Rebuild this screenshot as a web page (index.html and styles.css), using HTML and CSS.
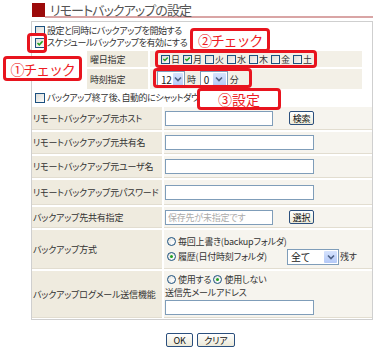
FILE: index.html
```html
<!DOCTYPE html>
<html lang="ja">
<head>
<meta charset="utf-8">
<title>リモートバックアップの設定</title>
<link rel="stylesheet" href="styles.css">
</head>
<body>
<div class="page">
  <div class="hdr">
    <span class="mark"></span>
    <h1 class="title">リモートバックアップの設定</h1>
  </div>
  <div class="panel">
    <div class="opt"><span class="cb"></span><span>設定と同時にバックアップを開始する</span></div>
    <div class="opt"><span class="cb on"><svg viewBox="0 0 8 8"><path d="M1.5 4 L3.3 5.8 L6.6 2.2" fill="none" stroke="#21a121" stroke-width="1.6"/></svg></span><span>スケジュールバックアップを有効にする</span></div>
    <div class="sched">
      <div class="sl r1">曜日指定</div>
      <div class="sv r1 days">
        <span class="day"><span class="cb on"><svg viewBox="0 0 8 8"><path d="M1.5 4 L3.3 5.8 L6.6 2.2" fill="none" stroke="#21a121" stroke-width="1.6"/></svg></span>日</span>
        <span class="day"><span class="cb on"><svg viewBox="0 0 8 8"><path d="M1.5 4 L3.3 5.8 L6.6 2.2" fill="none" stroke="#21a121" stroke-width="1.6"/></svg></span>月</span>
        <span class="day"><span class="cb"></span>火</span>
        <span class="day"><span class="cb"></span>水</span>
        <span class="day"><span class="cb"></span>木</span>
        <span class="day"><span class="cb"></span>金</span>
        <span class="day"><span class="cb"></span>土</span>
      </div>
      <div class="sl r2">時刻指定</div>
      <div class="sv r2 time">
        <span class="sel s-hour"><span class="sel-t">12</span><span class="arr"><svg viewBox="0 0 8 6"><path d="M1 1.5 L4 4.5 L7 1.5" fill="none" stroke="#4d6185" stroke-width="1.6"/></svg></span></span>
        <span class="unit">時</span>
        <span class="sel s-min"><span class="sel-t">0</span><span class="arr"><svg viewBox="0 0 8 6"><path d="M1 1.5 L4 4.5 L7 1.5" fill="none" stroke="#4d6185" stroke-width="1.6"/></svg></span></span>
        <span class="unit">分</span>
      </div>
    </div>
    <div class="opt opt-last"><span class="cb"></span><span>バックアップ終了後、自動的にシャットダウ</span></div>

    <div class="form">
      <div class="lab h1">リモートバックアップ元ホスト</div>
      <div class="val h1"><span class="inp w-s"></span><span class="btn b-search">検索</span></div>

      <div class="lab h2">リモートバックアップ元共有名</div>
      <div class="val h2"><span class="inp w-l"></span></div>

      <div class="lab h3">リモートバックアップ元ユーザ名</div>
      <div class="val h3"><span class="inp w-l"></span></div>

      <div class="lab h4">リモートバックアップ元パスワード</div>
      <div class="val h4"><span class="inp w-l"></span></div>

      <div class="lab h5">バックアップ先共有指定</div>
      <div class="val h5"><span class="inp w-s ph">保存先が未指定です</span><span class="btn b-search">選択</span></div>

      <div class="lab h6">バックアップ方式</div>
      <div class="val h6 stack">
        <div class="line"><span class="rd"></span><span>毎回上書き(backupフォルダ)</span></div>
        <div class="line"><span class="rd on"></span><span class="hist">履歴(日付時刻フォルダ)</span><span class="sel s-keep"><span class="sel-t">全て</span><span class="arr"><svg viewBox="0 0 8 6"><path d="M1 1.5 L4 4.5 L7 1.5" fill="none" stroke="#4d6185" stroke-width="1.6"/></svg></span></span><span>残す</span></div>
      </div>

      <div class="lab h7">バックアップログメール送信機能</div>
      <div class="val h7 stack">
        <div class="line"><span class="rd"></span><span>使用する</span><span class="rd on rd2"></span><span>使用しない</span></div>
        <div class="line">送信先メールアドレス</div>
        <span class="inp w-l"></span>
      </div>
    </div>
  </div>
  <div class="btns"><span class="btn b-ok">OK</span><span class="btn b-clear">クリア</span></div>
</div>

<span class="ring ring-cb"></span>
<span class="note note1">①チェック</span>
<span class="note note2">②チェック</span>
<span class="ring ring-days"></span>
<span class="ring ring-time"></span>
<span class="note note3">③設定</span>
</body>
</html>
```

FILE: styles.css
```css
html, body {
  margin: 0;
  padding: 0;
  background: #fff;
}
body {
  font-family: "Noto Sans CJK JP", "Noto Sans", sans-serif;
  font-feature-settings: "palt";
  font-size: 9px;
  letter-spacing: -0.2px;
  color: #333;
  width: 380px;
  height: 351px;
  position: relative;
  overflow: hidden;
}
.page {
  margin-left: 31px;
  width: 342px;
}
.hdr {
  display: flex;
  align-items: flex-start;
  padding-top: 3px;
  height: 18px;
}
.mark {
  display: block;
  width: 13px;
  height: 14px;
  margin-left: 1px;
  background: #9c0a0a;
}
.title {
  flex: 1;
  margin: 0;
  height: 13px;
  padding-left: 5px;
  border-bottom: 2px solid #d9a5a5;
  font-size: 13px;
  letter-spacing: -0.9px;
  font-weight: normal;
  line-height: 13px;
  color: #555;
  white-space: nowrap;
}
.panel {
  border: 1px solid #cfcfcf;
  padding: 3px 0 1px 0;
  margin-top: 0;
}
.opt {
  display: flex;
  align-items: center;
  height: 12px;
  padding-left: 3px;
  white-space: nowrap;
  line-height: 12px;
  letter-spacing: -0.45px;
}
.opt-last {
  margin-top: 3px;
}
.cb {
  box-sizing: border-box;
  display: inline-flex;
  align-items: center;
  justify-content: center;
  width: 10px;
  height: 10px;
  border: 1px solid #1c5180;
  background: linear-gradient(135deg, #dcdcd7, #fbfbf9);
  margin-right: 2px;
  flex: none;
}
.cb svg {
  width: 8px;
  height: 8px;
}
.sched {
  display: grid;
  grid-template-columns: 61px 212px;
  gap: 2px;
  margin: 2px 0 0 55px;
}
.sl {
  background: #efebdf;
  display: flex;
  align-items: center;
  padding-left: 3px;
}
.sv {
  background: #f3f0e7;
  display: flex;
  align-items: center;
}
.r1 { height: 16px; }
.r2 { height: 20px; }
.days {
  padding-left: 11px;
}
.day {
  display: inline-flex;
  align-items: center;
  width: 22px;
  flex: none;
}
.day .cb {
  width: 9px;
  height: 9px;
  margin-right: 1px;
}
.time {
  padding-left: 7px;
}
.unit {
  margin: 0 4px 0 2px;
}
.sel {
  box-sizing: border-box;
  display: inline-flex;
  align-items: stretch;
  height: 17px;
  border: 1px solid #7f9db9;
  background: #fff;
  flex: none;
}
.sel-t {
  flex: 1;
  padding-left: 3px;
  display: flex;
  align-items: center;
  font-size: 10px;
  color: #222;
}
.arr {
  width: 13px;
  margin: 1px;
  background: linear-gradient(#d6e3fd, #b4c9f7);
  border-radius: 1px;
  display: flex;
  align-items: center;
  justify-content: center;
}
.arr svg {
  width: 8px;
  height: 6px;
}
.s-hour { width: 28px; }
.s-min { width: 28px; }
.s-keep { width: 52px; height: 16px; margin-right: 1px; }
.form {
  display: grid;
  grid-template-columns: 130px 1fr;
  column-gap: 2px;
  row-gap: 2px;
  margin: 3px 0 0 0;
  background: #fff;
}
.lab {
  background: #efebdf;
  display: flex;
  align-items: center;
  padding-left: 1px;
  white-space: nowrap;
  border-bottom: 1px solid #e2ddd0;
}
.val {
  background: #f6f4ee;
  display: flex;
  align-items: center;
  padding-left: 1px;
  border-bottom: 1px solid #e2ddd0;
}
.h1 { height: 23px; }
.h2 { height: 22px; }
.h3 { height: 22px; }
.h4 { height: 25px; }
.h5 { height: 21px; }
.h6 { height: 39px; }
.h7 { height: 47px; }
.lab, .val { box-sizing: border-box; }
.inp {
  box-sizing: border-box;
  display: inline-flex;
  align-items: center;
  height: 15px;
  border: 1px solid #7f9db9;
  background: #fff;
  flex: none;
}
.w-s { width: 108px; }
.w-l { width: 149px; }
.ph {
  color: #aaa;
  padding-left: 2px;
}
.btn {
  box-sizing: border-box;
  display: inline-flex;
  align-items: center;
  justify-content: center;
  height: 14px;
  border: 1px solid #2b4f7d;
  border-radius: 2px;
  background: linear-gradient(#ffffff, #ece9d8);
  color: #111;
  font-size: 9px;
  flex: none;
}
.b-search {
  width: 25px;
  margin-left: 16px;
}
.stack {
  flex-direction: column;
  align-items: flex-start;
  justify-content: center;
}
.line {
  display: flex;
  align-items: center;
  height: 14px;
  white-space: nowrap;
}
.h6 .line { height: 15px; }
.h7 .line { height: 13px; }
.h7 .inp { margin-top: 1px; }
.rd {
  box-sizing: border-box;
  width: 9px;
  height: 9px;
  border-radius: 50%;
  border: 1px solid #1c5180;
  background: radial-gradient(circle at 65% 65%, #fff, #dcdcd7);
  margin: 0 2px 0 2px;
  flex: none;
  position: relative;
}
.rd.on::after {
  content: "";
  position: absolute;
  left: 2px;
  top: 2px;
  width: 3px;
  height: 3px;
  border-radius: 50%;
  background: #21a121;
}
.rd2 { margin-left: 2px; }
.hist {
  width: 109px;
}
.btns {
  display: flex;
  justify-content: center;
  gap: 4px;
  margin-top: 13px;
  padding-right: 3px;
}
.b-ok { width: 27px; height: 14px; }
.b-clear { width: 38px; height: 14px; }

/* annotations overlaid on the screenshot */
.ring, .note {
  position: absolute;
  box-sizing: border-box;
  border: 3px solid #e8141e;
  border-radius: 4px;
}
.note {
  background: #fff;
  color: #ee1c24;
  font-size: 14px;
  letter-spacing: 0;
  display: flex;
  align-items: center;
  justify-content: center;
  white-space: nowrap;
  line-height: 1;
}
.ring-cb { left: 27px; top: 33px; width: 20px; height: 20px; }
.note1 { left: 3px; top: 56px; width: 79px; height: 25px; }
.note2 { left: 190px; top: 28px; width: 80px; height: 24px; }
.ring-days { left: 155px; top: 50px; width: 162px; height: 18px; }
.ring-time { left: 153px; top: 68px; width: 99px; height: 20px; }
.note3 { left: 197px; top: 88px; width: 84px; height: 22px; }
.note1, .note2 { font-feature-settings: normal; letter-spacing: -1.2px; }
```
